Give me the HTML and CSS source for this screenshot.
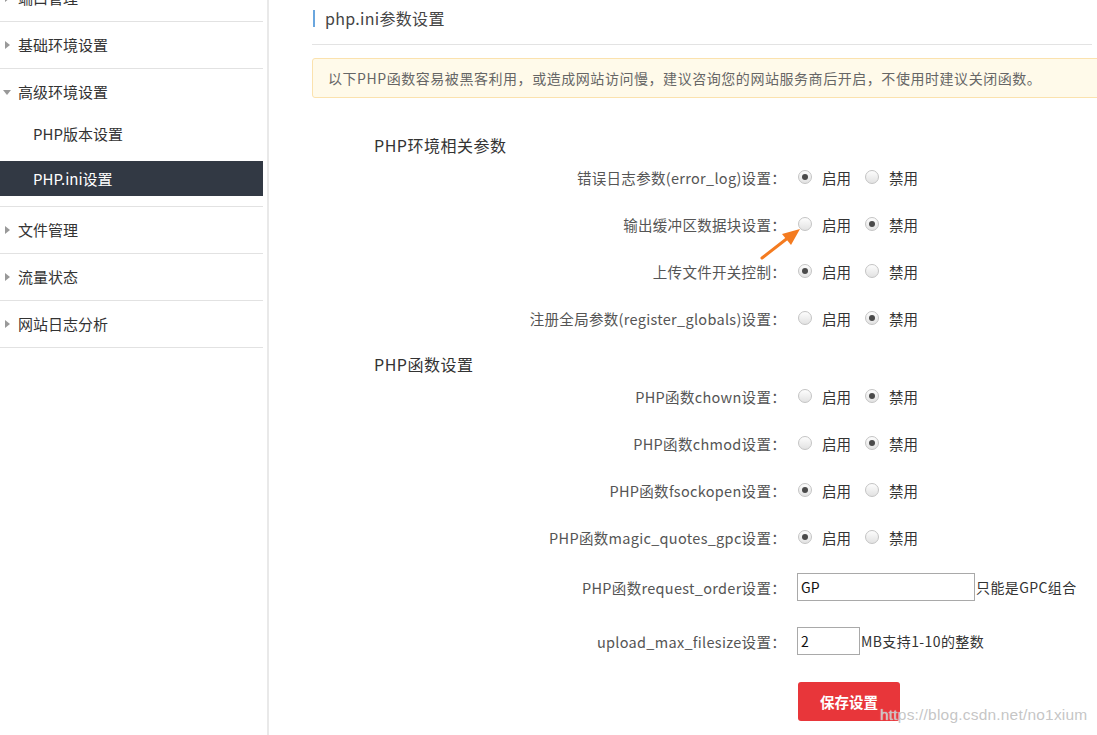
FILE: index.html
```html
<!DOCTYPE html>
<html lang="zh-CN">
<head>
<meta charset="utf-8">
<title>php.ini参数设置</title>
<link rel="stylesheet" href="styles.css">
</head>
<body>
<div class="page">
  <aside class="sidebar">
    <ul class="nav">
      <li class="nav-item"><div class="nav-head"><span class="tri tri-right"></span>端口管理</div></li>
      <li class="nav-item"><div class="nav-head"><span class="tri tri-right"></span>基础环境设置</div></li>
      <li class="nav-item">
        <div class="nav-head"><span class="tri tri-down"></span>高级环境设置</div>
        <ul class="sub">
          <li class="sub-item">PHP版本设置</li>
          <li class="sub-item active">PHP.ini设置</li>
        </ul>
      </li>
      <li class="nav-item"><div class="nav-head"><span class="tri tri-right"></span>文件管理</div></li>
      <li class="nav-item"><div class="nav-head"><span class="tri tri-right"></span>流量状态</div></li>
      <li class="nav-item"><div class="nav-head"><span class="tri tri-right"></span>网站日志分析</div></li>
    </ul>
  </aside>

  <main class="main">
    <div class="title"><span class="title-text">php.ini参数设置</span></div>
    <div class="notice">以下PHP函数容易被黑客利用，或造成网站访问慢，建议咨询您的网站服务商后开启，不使用时建议关闭函数。</div>

    <h3 class="section">PHP环境相关参数</h3>
    <div class="row">
      <span class="label">错误日志参数(error_log)设置：</span>
      <span class="ctrl"><span class="radio on"></span><span class="opt">启用</span><span class="radio"></span><span class="opt">禁用</span></span>
    </div>
    <div class="row">
      <span class="label">输出缓冲区数据块设置：</span>
      <span class="ctrl"><span class="radio"></span><span class="opt">启用</span><span class="radio on"></span><span class="opt">禁用</span></span>
    </div>
    <div class="row">
      <span class="label">上传文件开关控制：</span>
      <span class="ctrl"><span class="radio on"></span><span class="opt">启用</span><span class="radio"></span><span class="opt">禁用</span></span>
    </div>
    <div class="row">
      <span class="label">注册全局参数(register_globals)设置：</span>
      <span class="ctrl"><span class="radio"></span><span class="opt">启用</span><span class="radio on"></span><span class="opt">禁用</span></span>
    </div>

    <h3 class="section section-2">PHP函数设置</h3>
    <div class="row">
      <span class="label">PHP函数chown设置：</span>
      <span class="ctrl"><span class="radio"></span><span class="opt">启用</span><span class="radio on"></span><span class="opt">禁用</span></span>
    </div>
    <div class="row">
      <span class="label">PHP函数chmod设置：</span>
      <span class="ctrl"><span class="radio"></span><span class="opt">启用</span><span class="radio on"></span><span class="opt">禁用</span></span>
    </div>
    <div class="row">
      <span class="label">PHP函数fsockopen设置：</span>
      <span class="ctrl"><span class="radio on"></span><span class="opt">启用</span><span class="radio"></span><span class="opt">禁用</span></span>
    </div>
    <div class="row">
      <span class="label">PHP函数magic_quotes_gpc设置：</span>
      <span class="ctrl"><span class="radio on"></span><span class="opt">启用</span><span class="radio"></span><span class="opt">禁用</span></span>
    </div>
    <div class="row row-input">
      <span class="label">PHP函数request_order设置：</span>
      <span class="ctrl"><span class="input input-wide">GP</span><span class="hint">只能是GPC组合</span></span>
    </div>
    <div class="row row-input row-upload">
      <span class="label">upload_max_filesize设置：</span>
      <span class="ctrl"><span class="input input-small">2</span><span class="hint">MB支持1-10的整数</span></span>
    </div>
    <div class="actions"><button class="btn">保存设置</button></div>
  </main>
</div>

<svg class="arrow" width="60" height="50" viewBox="0 0 60 50">
  <line x1="6" y1="43" x2="33" y2="22" stroke="#f47b20" stroke-width="3" stroke-linecap="round"/>
  <polygon points="44,14 26,19 35,30" fill="#f47b20"/>
</svg>
<div class="watermark">https://blog.csdn.net/no1xium</div>
</body>
</html>
```

FILE: styles.css
```css
html, body {
  margin: 0;
  padding: 0;
  background: #fff;
  overflow: hidden;
}
body {
  width: 1097px;
  height: 735px;
  font-family: "Noto Sans CJK SC", "Noto Sans", sans-serif;
  font-size: 14px;
  color: #333;
  position: relative;
}
ul { list-style: none; margin: 0; padding: 0; }

.page {
  display: flex;
  align-items: stretch;
  height: 735px;
}

/* Sidebar */
.sidebar {
  width: 263px;
  padding-right: 4px;
  border-right: 2px solid #e9e9e9;
  flex: none;
  font-size: 15px;
}
.nav { margin-top: -25px; }
.nav-item { border-bottom: 1px solid #e2e2e2; }
.nav-head {
  height: 46px;
  line-height: 46px;
  padding-left: 18px;
  position: relative;
  color: #333;
}
.tri {
  position: absolute;
  width: 0;
  height: 0;
  top: 50%;
}
.tri-right {
  left: 5px;
  margin-top: -4px;
  border-left: 5px solid #999;
  border-top: 4px solid transparent;
  border-bottom: 4px solid transparent;
}
.tri-down {
  left: 3px;
  margin-top: -2px;
  border-top: 5px solid #999;
  border-left: 4px solid transparent;
  border-right: 4px solid transparent;
}
.sub {
  padding: 1px 0 10px;
  display: flex;
  flex-direction: column;
  gap: 10px;
}
.sub-item {
  height: 35px;
  line-height: 35px;
  padding-left: 33px;
  color: #333;
}
.sub-item.active {
  background: #323944;
  color: #fff;
}

/* Main */
.main {
  flex: 1;
  padding-left: 43px;
  padding-right: 5px;
  min-width: 0;
}
.title {
  padding-top: 9px;
  height: 24px;
  padding-bottom: 11px;
  border-bottom: 1px solid #e3e3e3;
}
.title-text {
  display: inline-block;
  border-left: 2px solid #6aa6de;
  padding-left: 10px;
  margin-left: 1px;
  height: 17px;
  line-height: 17px;
  font-size: 16px;
  letter-spacing: 0.3px;
  color: #444;
}
.notice {
  margin-top: 13px;
  margin-right: -12px;
  height: 38px;
  line-height: 38px;
  border: 1px solid #fbe2ae;
  border-radius: 3px;
  background: #fffaea;
  padding-left: 15px;
  font-size: 14px;
  letter-spacing: 0.55px;
  color: #666;
  white-space: nowrap;
}
.section {
  margin: 32px 0 1px;
  padding-left: 62px;
  height: 30px;
  line-height: 30px;
  font-size: 16px;
  letter-spacing: 0.5px;
  font-weight: normal;
  color: #333;
}
.section-2 { margin-top: 15px; }

.row {
  display: grid;
  grid-template-columns: 465px auto;
  column-gap: 21px;
  align-items: center;
  height: 32px;
  font-size: 14.5px;
}
.row + .row { margin-top: 15px; }
.row-input { margin-top: 18px !important; }
.row-upload { margin-top: 22px !important; }
.label {
  text-align: right;
  color: #555;
  white-space: nowrap;
  letter-spacing: 0.3px;
  margin-right: -9px;
}
.ctrl {
  display: flex;
  align-items: center;
}
.radio {
  width: 14px;
  height: 14px;
  box-sizing: border-box;
  border-radius: 50%;
  border: 1px solid #c4c4c4;
  background: linear-gradient(#fdfdfd, #e2e2e2);
  position: relative;
  flex: none;
}
.radio.on::after {
  content: "";
  position: absolute;
  left: 3px;
  top: 3px;
  width: 6px;
  height: 6px;
  border-radius: 50%;
  background: #4a4a4a;
}
.opt {
  margin-left: 10px;
  margin-right: 14px;
  color: #333;
}
.input {
  display: block;
  box-sizing: border-box;
  height: 28px;
  line-height: 26px;
  border: 1px solid #a9a9a9;
  padding-left: 3px;
  font-size: 14px;
  color: #111;
  margin-left: -1px;
}
.input-wide { width: 178px; }
.input-small { width: 63px; }
.hint {
  color: #333;
  font-size: 14px;
  letter-spacing: 0.4px;
  margin-left: 1px;
}
.actions {
  padding-left: 486px;
  margin-top: 25px;
}
.btn {
  width: 102px;
  height: 39px;
  border: none;
  border-radius: 3px;
  background: #e8363a;
  color: #fff;
  font-family: "Noto Sans CJK SC", sans-serif;
  font-size: 14.5px;
  font-weight: bold;
  padding: 0;
}

/* overlays */
.arrow {
  position: absolute;
  left: 756px;
  top: 215px;
}
.watermark {
  position: absolute;
  left: 880px;
  top: 706px;
  font-family: "Liberation Sans", Arial, sans-serif;
  font-size: 15.5px;
  color: rgba(190, 190, 190, 0.9);
  text-shadow: 0 0 1px #fff;
  letter-spacing: 0.2px;
}
```
